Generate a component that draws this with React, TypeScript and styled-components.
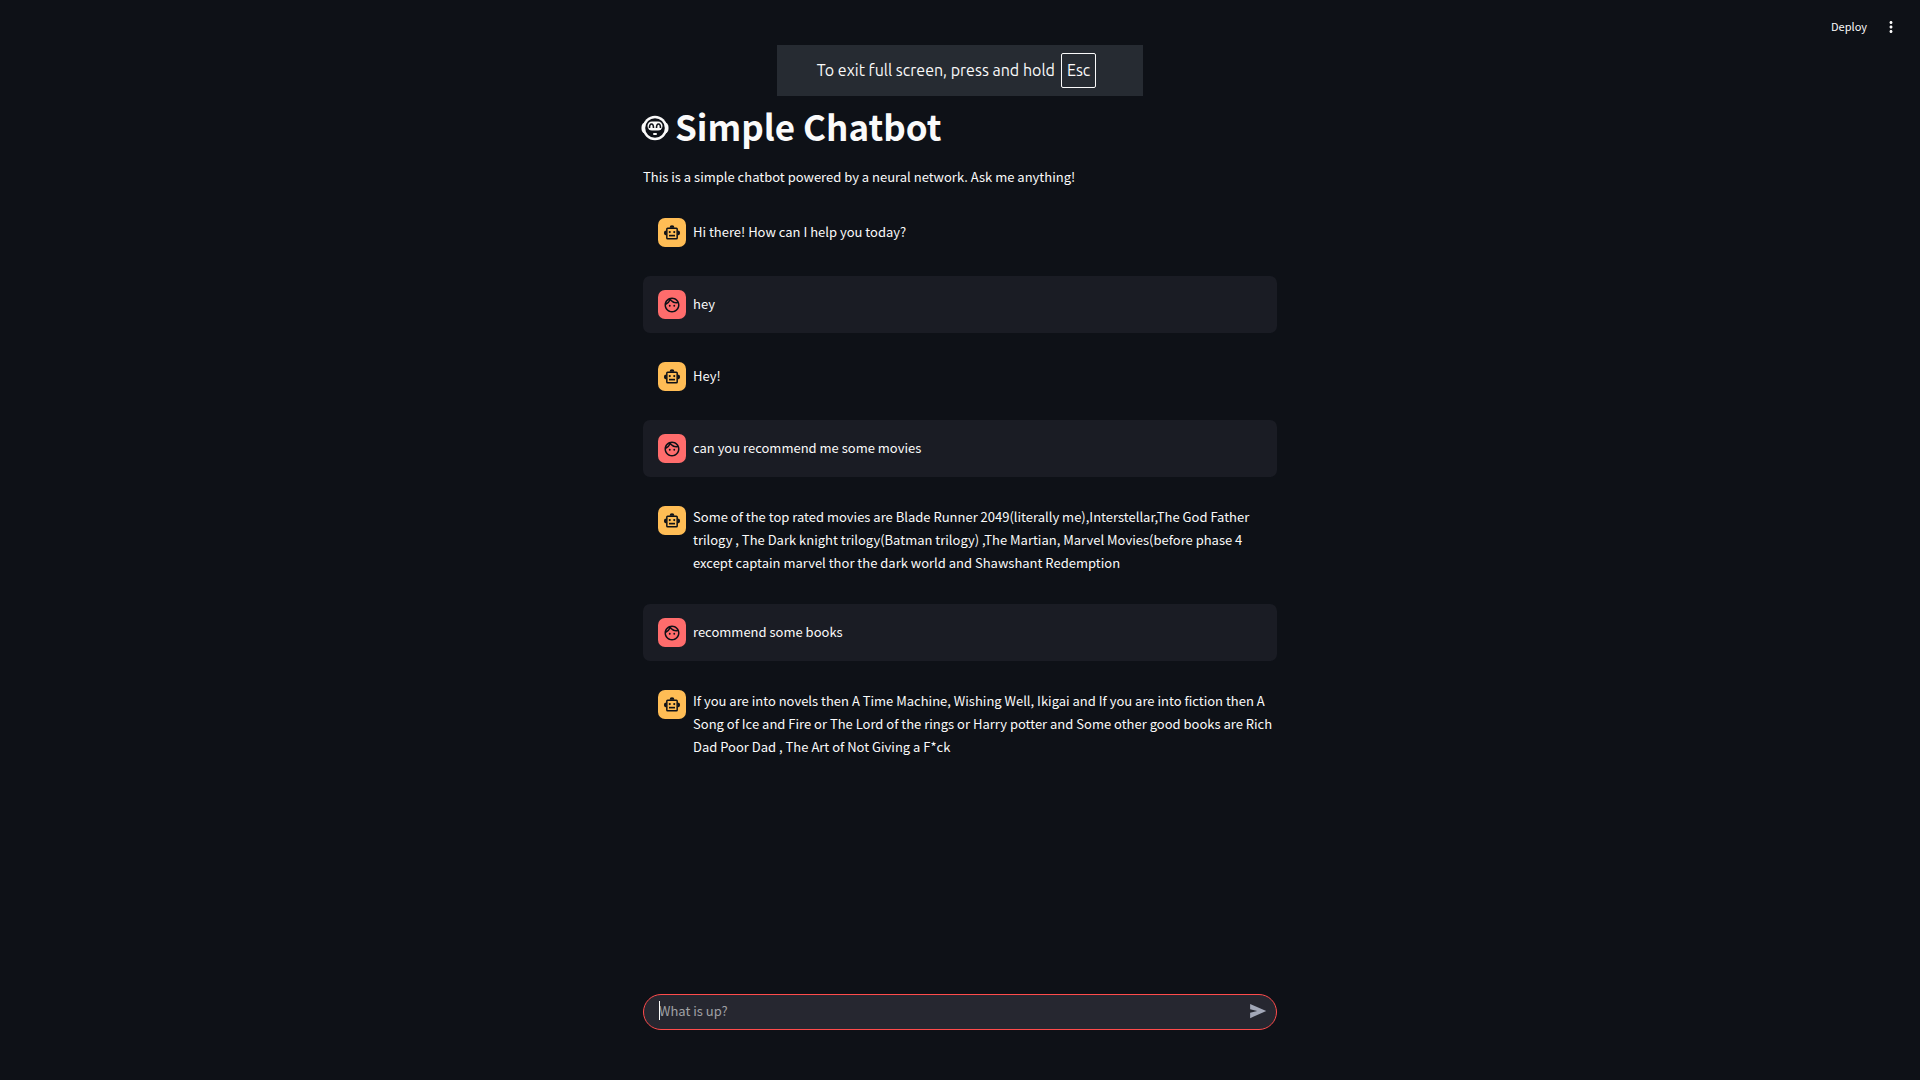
import React, { useState } from "react";
import styled, { createGlobalStyle } from "styled-components";
import { MdOutlineFace, MdMoreVert } from "react-icons/md";

const GlobalStyle = createGlobalStyle`
  * { box-sizing: border-box; }
  body {
    margin: 0;
    background: #0e1117;
    color: #fafafa;
    font-family: "Source Sans Pro", "Noto Sans CJK SC", sans-serif;
    font-size: 13px;
    line-height: 23px;
  }
`;

const Page = styled.div`
  min-height: 100vh;
  display: flex;
  flex-direction: column;
`;

const Header = styled.header`
  height: 54px;
  padding: 0 20px;
  display: flex;
  align-items: center;
  justify-content: flex-end;
  gap: 15px;
`;

const HeaderButton = styled.button`
  display: flex;
  align-items: center;
  padding: 0;
  border: 0;
  background: none;
  color: inherit;
  font: inherit;
  font-size: 11px;
  cursor: pointer;
`;

const HeaderLabel = styled.span`
  padding-bottom: 2px;
`;

const FullscreenNotice = styled.div`
  position: fixed;
  top: 45px;
  left: 0;
  right: 0;
  width: fit-content;
  margin: 0 auto;
  padding: 8px 47px 8px 40px;
  display: flex;
  align-items: center;
  gap: 6px;
  background: #262b32;
  font-family: Ubuntu, "Noto Sans", sans-serif;
  font-size: 16px;
  white-space: nowrap;
`;

const Key = styled.kbd`
  height: 35px;
  padding: 0 5px;
  display: flex;
  align-items: center;
  border: 1px solid #fafafa;
  border-radius: 2px;
  font: inherit;
`;

const Column = styled.main`
  width: 100%;
  max-width: 634px;
  margin: 0 auto;
  padding: 50px 0 40px;
  flex: 1;
`;

const Title = styled.h1`
  margin: 0;
  display: flex;
  align-items: center;
  gap: 6px;
  font-size: 35px;
  line-height: 44px;
  font-weight: 700;
`;

const TitleIcon = styled.svg`
  width: 28px;
  height: 26px;
  margin: 4px 0 0 -2px;
`;

const Intro = styled.p`
  margin: 17px 0 16px;
`;

const Messages = styled.div`
  display: flex;
  flex-direction: column;
  gap: 15px;
`;

const Message = styled.article<{ $user: boolean }>`
  padding: 13px 4px 14px 15px;
  display: flex;
  align-items: flex-start;
  gap: 7px;
  border-radius: 7px;
  background: ${(p) => (p.$user ? "#1a1c24" : "transparent")};
`;

const Avatar = styled.div<{ $user: boolean }>`
  width: 28px;
  height: 29px;
  margin-top: 1px;
  flex: none;
  display: flex;
  align-items: center;
  justify-content: center;
  border-radius: 7px;
  background: ${(p) => (p.$user ? "#ff6c6c" : "#ffbd55")};
  color: #0e1117;
`;

const MessageText = styled.p`
  margin: auto 0;
  padding-bottom: 1px;
`;

const Footer = styled.footer`
  width: 100%;
  max-width: 634px;
  margin: 0 auto;
  padding-bottom: 50px;
`;

const ChatForm = styled.form`
  position: relative;
  height: 36px;
  padding: 0 9px 2px 15px;
  display: flex;
  align-items: center;
  border: 1px solid #ff4b4b;
  border-radius: 18px;
  background: #262730;
`;

const ChatInput = styled.input`
  flex: 1;
  min-width: 0;
  padding: 0 0 2px;
  border: 0;
  outline: 0;
  background: none;
  color: inherit;
  font: inherit;
  caret-color: #fafafa;

  &::placeholder {
    color: #a0a1a5;
    opacity: 1;
  }
`;

const Caret = styled.span`
  position: absolute;
  left: 15px;
  top: 6px;
  width: 1px;
  height: 19px;
  background: #fafafa;
`;

const SendButton = styled.button`
  display: flex;
  padding: 0;
  border: 0;
  background: none;
  color: #a3a8b8;
`;

type Entry = { user: boolean; text: string };

const history: Entry[] = [
  { user: false, text: "Hi there! How can I help you today?" },
  { user: true, text: "hey" },
  { user: false, text: "Hey!" },
  { user: true, text: "can you recommend me some movies" },
  {
    user: false,
    text: "Some of the top rated movies are Blade Runner 2049(literally me),Interstellar,The God Father trilogy , The Dark knight trilogy(Batman trilogy) ,The Martian, Marvel Movies(before phase 4 except captain marvel thor the dark world and Shawshant Redemption",
  },
  { user: true, text: "recommend some books" },
  {
    user: false,
    text: "If you are into novels then A Time Machine, Wishing Well, Ikigai and If you are into fiction then A Song of Ice and Fire or The Lord of the rings or Harry potter and Some other good books are Rich Dad Poor Dad , The Art of Not Giving a F*ck",
  },
];

function RobotIcon() {
  return (
    <svg width="18" height="18" viewBox="0 0 24 24" fill="currentColor" aria-hidden="true">
      <path d="M8.8 5a3.2 3.2 0 0 1 6.4 0z" />
      <path d="M4.4 8.8a3.2 3.2 0 0 0 0 6.4zM19.6 8.8a3.2 3.2 0 0 1 0 6.4z" />
      <rect x="5.1" y="5.6" width="13.8" height="14.2" rx="1" fill="none" stroke="currentColor" strokeWidth="2" />
      <circle cx="9" cy="10.8" r="1.4" />
      <circle cx="15" cy="10.8" r="1.4" />
      <rect x="8" y="14.4" width="8" height="2.2" />
    </svg>
  );
}

export default function App() {
  const [draft, setDraft] = useState("");

  return (
    <Page>
      <GlobalStyle />
      <Header>
        <HeaderButton type="button">
          <HeaderLabel>Deploy</HeaderLabel>
        </HeaderButton>
        <HeaderButton type="button" aria-label="Main menu">
          <MdMoreVert size={18} />
        </HeaderButton>
      </Header>
      <FullscreenNotice role="status">
        <span>To exit full screen, press and hold</span>
        <Key>Esc</Key>
      </FullscreenNotice>
      <Column>
        <Title>
          <TitleIcon viewBox="0 0 28 26" aria-hidden="true">
            <rect x="0.5" y="7" width="27" height="12" rx="5" fill="#fafafa" />
            <circle cx="14" cy="13" r="12.2" fill="#fafafa" />
            <circle cx="14" cy="13" r="9.8" fill="#0e1117" />
            <rect x="6.5" y="6.5" width="15" height="9" rx="4.5" fill="#fafafa" />
            <path
              d="M8.5 13 Q8.5 9 10.5 9 T12.5 13 M15.5 13 Q15.5 9 17.5 9 T19.5 13"
              fill="none"
              stroke="#0e1117"
              strokeWidth="1.6"
            />
            <rect x="12" y="18" width="4" height="2" rx="1" fill="#fafafa" />
          </TitleIcon>
          Simple Chatbot
        </Title>
        <Intro>This is a simple chatbot powered by a neural network. Ask me anything!</Intro>
        <Messages>
          {history.map((m, i) => (
            <Message key={i} $user={m.user}>
              <Avatar $user={m.user}>
                {m.user ? <MdOutlineFace size={18} /> : <RobotIcon />}
              </Avatar>
              <MessageText>{m.text}</MessageText>
            </Message>
          ))}
        </Messages>
      </Column>
      <Footer>
        <ChatForm onSubmit={(e) => e.preventDefault()}>
          <ChatInput
            aria-label="Chat message"
            placeholder="What is up?"
            value={draft}
            onChange={(e) => setDraft(e.target.value)}
          />
          {draft === "" && <Caret />}
          <SendButton type="submit" aria-label="Send message">
            <svg width="18" height="18" viewBox="0 0 24 24" fill="currentColor" aria-hidden="true">
              <path d="M1.5 21.5V14.2L11 12 1.5 9.8V2.5L23 12z" />
            </svg>
          </SendButton>
        </ChatForm>
      </Footer>
    </Page>
  );
}
